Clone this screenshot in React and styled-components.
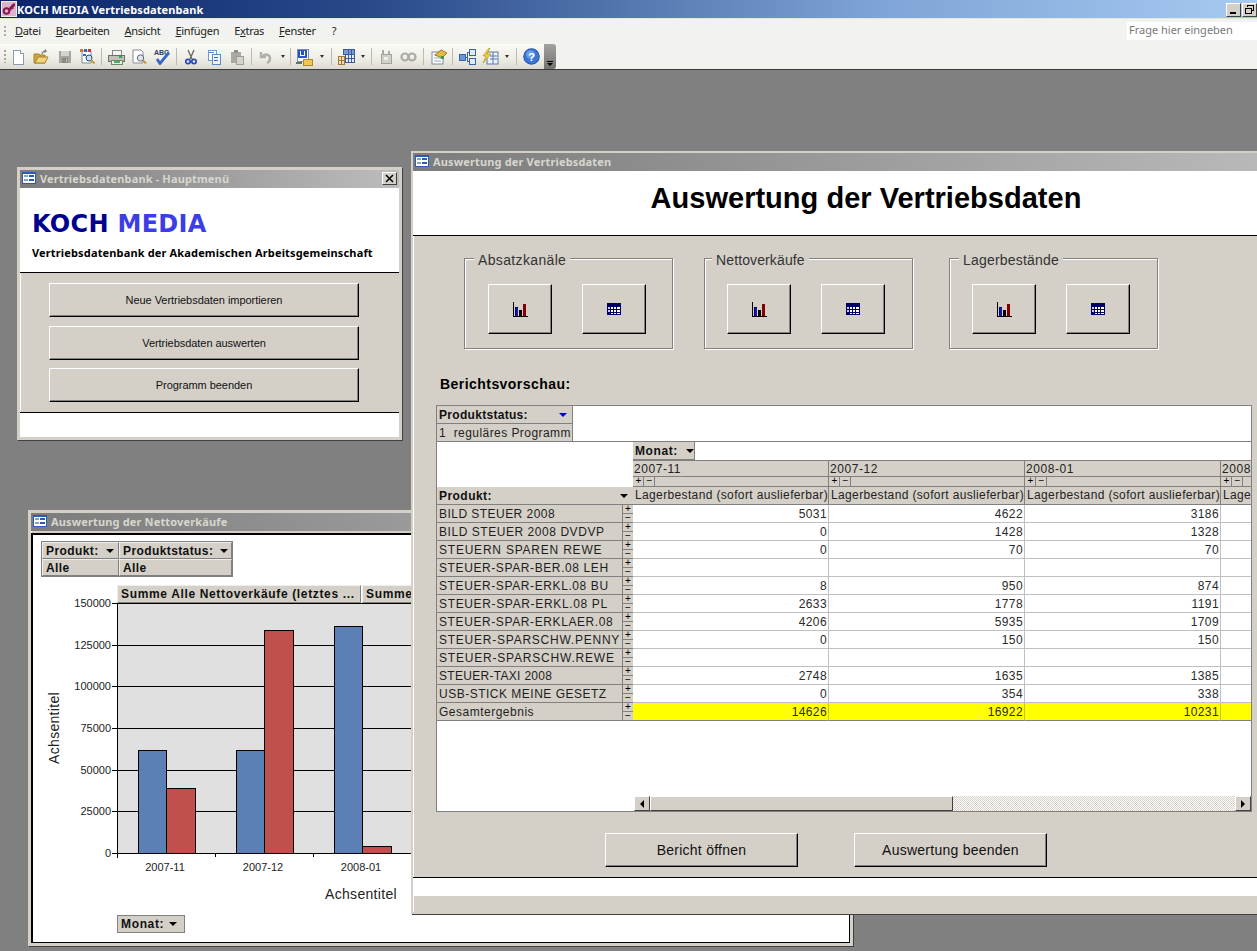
import React from 'react';
import styled, { createGlobalStyle } from 'styled-components';

const Global = createGlobalStyle`
  html, body { margin: 0; padding: 0; background: #808080; overflow: hidden; }
  * { box-sizing: border-box; }
`;
const ui = '"Noto Sans", "DejaVu Sans", sans-serif';
const arial = '"Liberation Sans", Arial, sans-serif';

const Desktop = styled.div`
  position: relative; width: 1257px; height: 951px; overflow: hidden; background: #808080;
  font-family: ${arial}; color: #000;
`;
const AppTitle = styled.header`
  height: 18px; display: flex; align-items: center; padding-left: 1px;
  background: linear-gradient(90deg, #0a246a 0%, #2a4a8a 30%, #7fa4d6 70%, #a6caf0 100%);
  color: #fff; font: bold 11px ${ui}; letter-spacing: .1px;
`;
const CaptionGroup = styled.div`margin-left: auto; display: flex; gap: 1px; padding-top: 1px;`;
const CaptionBtn = styled.button`
  width: 15px; height: 14px; padding: 0; display: flex; align-items: center; justify-content: center;
  background: #d4d0c8; border: 1px solid; border-color: #fff #404040 #404040 #fff;
`;
const Chrome = styled.div`
  height: 52px; background: #f2f2ee; border-bottom: 1px solid #3c3c3c; display: flex; flex-direction: column; position: relative;
`;
const MenuBar = styled.nav`
  height: 26px; display: flex; align-items: center; padding: 0 0 2px 15px; font: 11px ${ui}; color: #222; letter-spacing: -.3px;
  border-top: 1px solid #e8e6da; position: relative;
  &::before { content: ''; position: absolute; left: 4px; top: 7px; width: 2px; height: 11px;
    background: repeating-linear-gradient(#b0ad9e 0 2px, transparent 2px 4px); }
`;
const MenuItem = styled.span`
  margin-right: ${p => p.$gap}px; white-space: nowrap;
  u { text-decoration-thickness: 1px; text-underline-offset: 1px; }
`;
const AskBox = styled.div`
  position: absolute; left: 1127px; top: 3px; width: 130px; height: 18px; background: #fff;
  color: #777; font: 11px ${ui}; letter-spacing: 0; padding-left: 2px; line-height: 16px;
`;
const ToolRow = styled.div`
  width: 556px; height: 25px; display: flex; align-items: center; padding-left: 6px; position: relative;
  background: linear-gradient(#fbfbf8, #eeede5 60%, #dcdad0); border-radius: 0 3px 3px 0;
  &::before { content: ''; position: absolute; left: 4px; top: 6px; width: 2px; height: 13px;
    background: repeating-linear-gradient(#a8a597 0 2px, transparent 2px 4px); }
`;
const ToolSlot = styled.span`
  width: ${p => p.$w}px; height: 16px; display: flex; align-items: center; justify-content: center; flex: none;
`;
const ToolSep = styled.span`width: 1px; height: 17px; background: #bdbbad; flex: none; margin: 0 ${p => p.$m ?? 2}px;`;
const ToolEnd = styled.span`
  margin-left: auto; width: 12px; height: 25px; background: linear-gradient(#a2a29e, #72726e); border-radius: 0 3px 3px 0;
  display: flex; flex-direction: column; align-items: center; justify-content: flex-end; padding-bottom: 3px; gap: 1px;
  &::before { content: ''; width: 6px; height: 1px; background: #000; }
  &::after { content: ''; border: 3px solid transparent; border-top-color: #000; border-bottom: 0; }
`;
const MiniCaret = styled.span`
  width: 0; height: 0; border: 2.5px solid transparent; border-top: 3px solid #333; border-bottom: 0;
`;

const Win = styled.section`
  position: absolute; left: ${p => p.$x}px; top: ${p => p.$y}px; width: ${p => p.$w}px; height: ${p => p.$h}px;
  background: #d4d0c8; border: ${p => p.$b ?? 2}px solid #d4d0c8; display: flex; flex-direction: column;
  box-shadow: inset 1px 1px 0 #fff, 1px 1px 0 #404040;
`;
const WinTitle = styled.div`
  height: ${p => p.$h}px; flex: none; display: flex; align-items: center; gap: 4px; padding: 0 1px 2px 2px;
  background: linear-gradient(90deg, #7c7c7c, #bdbdbd);
  color: #d8d6ce; font: bold 11px ${ui}; letter-spacing: .15px; white-space: nowrap;
`;
const CloseBtn = styled(CaptionBtn)`margin-left: auto; height: 13px; margin-right: 1px;`;

/* menu window */
const Banner = styled.div`height: 84px; flex: none; background: #fff; padding: 20px 0 0 12px;`;
const Brand = styled.div`font: bold 24px "DejaVu Sans", sans-serif; color: #000090; line-height: 32px; letter-spacing: .3px;`;
const BrandAccent = styled.span`color: #3c3ce8;`;
const SubTitle = styled.div`font: bold 11px ${ui}; margin-top: 5px; white-space: nowrap; letter-spacing: .15px;`;
const Rule = styled.div`height: 1px; flex: none; background: #000;`;
const MenuPanel = styled.div`
  height: 139px; flex: none; display: flex; flex-direction: column; gap: 8.5px; padding: 10px 0 0 29px;
`;
const RaisedBtn = styled.button`
  width: ${p => p.$w}px; height: ${p => p.$h}px; flex: none; padding: 0; display: flex; align-items: center; justify-content: center;
  background: #d4d0c8; color: #111; border: 1px solid; border-color: #fff #000 #000 #fff;
  box-shadow: inset -1px -1px 0 #808080;
  font: ${p => p.$font}; letter-spacing: ${p => p.$ls ?? 0}px;
`;
const WhiteStrip = styled.div`flex: ${p => (p.$h ? 'none' : 1)}; height: ${p => (p.$h ? `${p.$h}px` : 'auto')}; background: #fff;`;

/* report window */
const ReportHead = styled.div`
  height: 64px; flex: none; background: #fff; display: flex; align-items: center; justify-content: center;
  font: bold 29px ${arial}; padding: 0 2px 9px 0; letter-spacing: .02px;
`;
const ReportBody = styled.div`height: 641px; flex: none; padding: 22px 0 0 23px; display: flex; flex-direction: column;`;
const Groups = styled.div`display: flex; padding-left: 28px;`;
const Group = styled.div`
  position: relative; width: ${p => p.$w}px; height: 91px; margin-left: ${p => p.$ml}px; flex: none;
  border: 1px solid #808080; box-shadow: 1px 1px 0 #fff, inset 1px 1px 0 #fff;
  display: flex; gap: 30px; padding: 25px 0 0 ${p => p.$pl}px;
`;
const GroupLabel = styled.span`
  position: absolute; left: ${p => p.$l}px; top: -7px; padding: 0 4px; background: #d4d0c8; font: 14px ${arial}; color: #333; line-height: 16px; letter-spacing: ${p => p.$ls}px;
`;
const Section = styled.h2`margin: 27px 0 0 4px; font: bold 14px ${arial}; letter-spacing: 0.45px; line-height: 16px;`;
const Pivot = styled.div`
  margin-top: 13px; width: 816px; height: 407px; flex: none; background: #fff; border: 1px solid #808080;
  display: flex; flex-direction: column; overflow: hidden; font: 12px ${arial}; letter-spacing: 0.36px; color: #222;
`;
const FilterZone = styled.div`height: 36px; flex: none; border-bottom: 1px solid #808080;`;
const ChipBase = styled.div`
  background: #d4d0c8; border-right: 1px solid #808080; border-bottom: 1px solid #808080;
  display: flex; align-items: center; padding-left: 2px; white-space: pre; overflow: hidden;
`;
const FilterHead = styled(ChipBase)`width: 136px; height: 18px; font-weight: bold; justify-content: space-between; padding-right: 5px; padding-top: 1px; letter-spacing: .3px; color: #111;`;
const FilterVal = styled(ChipBase)`width: 136px; height: 17px; border-bottom: 0; letter-spacing: .44px; font-size: 12px; padding-top: 1px;`;
const Caret = styled.span`
  flex: none; width: 0; height: 0; border: 4px solid transparent; border-top: 4px solid ${p => p.$c || '#000'}; border-bottom: 0;
`;
const PivotGrid = styled.div`
  flex: 1; display: grid; grid-template-columns: 196px repeat(4, 196px); grid-auto-rows: 18px;
  grid-template-rows: 19px 16px 10px 18px;
  align-content: start; min-height: 0;
`;
const Corner = styled.div`grid-row: 1 / span 3; grid-column: 1; background: #fff;`;
const MonatBar = styled.div`grid-column: 2 / span 4; background: #fff; border-bottom: 1px solid #808080; display: flex;`;
const FieldChip = styled(ChipBase)`
  width: ${p => p.$w}px; height: 18px; font-weight: bold; gap: 4px; letter-spacing: .6px; padding-top: 1px; color: #111;
`;
const ColHead = styled.div`background: #d4d0c8; border-right: 1px solid #808080; border-bottom: 1px solid #808080; padding-left: 1px; line-height: 17px; letter-spacing: .55px; overflow: hidden; white-space: nowrap;`;
const ToggleRow = styled.div`background: #d4d0c8; border-right: 1px solid #808080; border-bottom: 1px solid #808080; display: flex; padding-left: 1px;`;
const Toggle = styled.span`
  width: 10px; height: 9px; border-right: 1px solid #808080; font: 10px/8px ${arial}; color: #000; text-align: center; letter-spacing: 0; margin-right: 1px;
`;
const RowField = styled(ChipBase)`font-weight: bold; justify-content: space-between; padding-right: 5px; height: 18px; letter-spacing: .45px; border-right: 0; color: #111;`;
const MeasureHead = styled(ColHead)`line-height: 17px; padding-left: 2px; letter-spacing: .36px; height: 18px;`;
const RowHead = styled(ChipBase)`
  height: 18px; padding-left: 2px; padding-right: 0; border-right: 0; justify-content: space-between; color: #1e1e1e;
`;
const RowLabel = styled.span`padding-top: 1px; letter-spacing: ${p => p.$ls}px;`;
const Stepper = styled.span`
  flex: none; width: 11px; height: 17px; border-left: 1px solid #808080; font: 10px/8px ${arial}; color: #000; text-align: center; letter-spacing: 0; display: flex; flex-direction: column;
  span { height: 8px; display: block; }
  span + span { border-top: 1px solid #808080; }
`;
const DataCell = styled.div`
  height: 18px; text-align: right; padding-right: 1px; line-height: 19px; border-right: 1px solid ${p => (p.$total ? '#c8c800' : '#c0c0c0')};
  border-bottom: 1px solid ${p => (p.$total ? '#808080' : '#c0c0c0')}; background: ${p => (p.$total ? '#ffff00' : '#fff')}; letter-spacing: .4px; color: #2a2a2a;
  overflow: hidden;
`;
const ScrollBar = styled.div`height: 15px; flex: none; margin-left: 197px; display: flex;`;
const ScrollBtn = styled.button`
  width: 16px; height: 15px; padding: 0; flex: none; background: #d4d0c8; display: flex; align-items: center; justify-content: center;
  border: 1px solid; border-color: #fff #404040 #404040 #fff;
`;
const ScrollThumb = styled.div`width: 303px; flex: none; background: #d4d0c8; border: 1px solid; border-color: #fff #404040 #404040 #fff;`;
const ScrollTrack = styled.div`flex: 1; background: repeating-conic-gradient(#d4d0c8 0 25%, #fff 0 50%) 0 0 / 2px 2px;`;
const ArrowL = styled.span`width: 0; height: 0; border: 4px solid transparent; border-right: 4px solid #000; border-left: 0;`;
const ArrowR = styled.span`width: 0; height: 0; border: 4px solid transparent; border-left: 4px solid #000; border-right: 0;`;
const BottomBtns = styled.div`margin: 21px 0 0 169px; display: flex; gap: 56px;`;

/* chart window */
const ChartBody = styled.div`
  flex: 1; margin-top: 2px; background: #fff; border: 2px solid #000; border-right-width: 1px; border-bottom-width: 1px; padding: 6px 0 0 8px; position: relative; overflow: hidden;
`;
const FilterTable = styled.div`
  display: grid; grid-template-columns: 77px 113px; grid-auto-rows: 17px; width: 192px; background: #808080;
  border: 1px solid #808080; font: bold 12px ${arial}; letter-spacing: .4px; color: #111;
`;
const FilterCell = styled.div`
  background: #d4d0c8; border: 1px solid; border-color: #eee #808080 #808080 #eee; display: flex; align-items: center; gap: 7px; padding-left: 3px; white-space: nowrap;
`;
const ChartArea = styled.div`position: relative; margin: 8px 0 0 -6px; height: 322px; width: 815px;`;
const ChartSvg = styled.svg`display: block; text { font-family: ${arial}; fill: #222; }`;
const Legends = styled.div`position: absolute; left: 82px; top: 0; display: flex; gap: 1px; font: bold 12px ${arial}; letter-spacing: .65px; color: #111;`;
const LegendTab = styled.div`
  width: ${p => p.$w}px; height: 18px; background: #d4d0c8; border: 1px solid; border-color: #eee #808080 #808080 #eee; padding-left: 3px; line-height: 16px; white-space: nowrap; overflow: hidden;
`;
const MonatChip = styled.div`
  margin: 8px 0 0 76px; width: 68px; height: 18px; background: #d4d0c8; border: 1px solid #808080; display: flex; align-items: center; gap: 5px; padding-left: 3px;
  font: bold 12px ${arial}; letter-spacing: .65px; color: #111;
`;

/* ——— icons ——— */
const Ico = ({ s = 16, children, vb = '0 0 16 16' }) => <svg width={s} height={s} viewBox={vb} shapeRendering="crispEdges">{children}</svg>;
const AccessIcon = () => (
  <svg width="16" height="16" viewBox="0 0 16 16"><rect width="16" height="16" fill="#dcb4cc" /><rect x=".5" y=".5" width="15" height="15" fill="none" stroke="#f4e8f0" /><circle cx="5.500" cy="10" r="2.800" fill="none" stroke="#8a1850" strokeWidth="2" /><path d="M7 8l5-5.500h2v2.500l-1.500 1V8h-2v1.500H8z" fill="#8a1850" /></svg>
);
const FormIcon = () => (
  <Ico s={14} vb="0 0 14 14"><rect x="0" y="1" width="14" height="12" fill="#2c5ab8" /><rect x="1" y="3" width="12" height="9" fill="#fff" /><rect x="2" y="4" width="4" height="2" fill="#8a9fc9" /><rect x="7" y="4" width="5" height="2" fill="#2c5ab8" /><rect x="2" y="8" width="4" height="2" fill="#8a9fc9" /><rect x="7" y="8" width="5" height="2" fill="#2c5ab8" /></Ico>
);
const BarsIcon = () => (
  <Ico><path d="M1 1v14h15" fill="none" stroke="#000" /><rect x="3" y="6" width="3" height="9" fill="#000080" /><rect x="7" y="9" width="3" height="6" fill="#000" /><rect x="11" y="3" width="3" height="12" fill="#800000" /><rect x="4" y="7" width="2" height="8" fill="#1a1a9c" /></Ico>
);
const TableIcon = () => (
  <Ico><rect x="1" y="2" width="14" height="12" fill="#000060" /><rect x="5" y="6" width="2" height="2" fill="#fff" /><rect x="8" y="6" width="2" height="2" fill="#fff" /><rect x="11" y="6" width="3" height="2" fill="#fff" /><rect x="5" y="9" width="2" height="2" fill="#fff" /><rect x="8" y="9" width="2" height="2" fill="#fff" /><rect x="11" y="9" width="3" height="2" fill="#fff" /><rect x="5" y="12" width="2" height="1" fill="#fff" /><rect x="8" y="12" width="2" height="1" fill="#fff" /><rect x="11" y="12" width="3" height="1" fill="#fff" /><rect x="2" y="6" width="2" height="2" fill="#c8c8e8" /><rect x="2" y="9" width="2" height="2" fill="#c8c8e8" /></Ico>
);
const t = {
  page: <Ico><path d="M3 1h7l3 3v11H3z" fill="#fff" stroke="#8a9ab0" /><path d="M10 1v3h3" fill="#e6ecf4" stroke="#8a9ab0" /></Ico>,
  open: <svg width="17" height="16" viewBox="0 0 17 16"><path d="M1 5h5l1 1h5v8H1z" fill="#cfa23c" stroke="#a88432" /><path d="M2 14l3-6h10l-3 6z" fill="#f2d47c" stroke="#a88432" /><path d="M9 5c0-2 2-3 4-3l-1-1.500M13 2l-1.500 1.500" fill="none" stroke="#7c7c7c" strokeWidth="1.300" /></svg>,
  save: <Ico><rect x="2" y="2" width="12" height="12" fill="#a6a69e" /><rect x="4" y="2" width="8" height="5" fill="#d4d4ce" /><rect x="5" y="9" width="6" height="5" fill="#8a8a84" /><rect x="9" y="10" width="1" height="3" fill="#c4c4be" /></Ico>,
  find: <svg width="17" height="16" viewBox="0 0 17 16"><path d="M3 2h9v12H3z" fill="#fff" stroke="#7a8aa0" /><rect x="1" y="0" width="3" height="3" fill="#d8782c" /><rect x="5" y="0" width="3" height="3" fill="#3a6ab8" /><rect x="9" y="0" width="3" height="3" fill="#c83a3a" /><rect x="4" y="5" width="3" height="2" fill="#3a6ab8" /><circle cx="10" cy="9" r="3" fill="#cfe3f7" stroke="#23477f" /><path d="M12 11l3.500 3.500" stroke="#c89a30" strokeWidth="2" /></svg>,
  print: <Ico s={18} vb="0 0 18 18"><rect x="5" y="2" width="9" height="5" fill="#f4f4f0" stroke="#8a8a8a" /><rect x="1" y="7" width="16" height="6" fill="#c0c0b8" stroke="#6e6e6e" /><rect x="4" y="12" width="11" height="4" fill="#e8f0e8" stroke="#6e8a6e" /><rect x="12" y="8" width="3" height="2" fill="#3aa04a" /><rect x="7" y="13" width="6" height="2" fill="#4ab05a" /></Ico>,
  prev: <svg width="17" height="16" viewBox="0 0 17 16"><path d="M2 1h8l2 2v11H2z" fill="#fff" stroke="#8a8a9c" /><circle cx="9.500" cy="9" r="3.200" fill="#dbe8f4" stroke="#666" /><path d="M12 11.500l3 3" stroke="#c89a30" strokeWidth="2" /></svg>,
  spell: <svg width="19" height="16" viewBox="0 0 19 16"><text x="1" y="6" fontSize="7" fontWeight="700" fontFamily="Liberation Sans" fill="#27406e">ABC</text><path d="M4 10l3 4.500 9-11" fill="none" stroke="#3568c4" strokeWidth="2.800" /></svg>,
  cut: <svg width="16" height="16" viewBox="0 0 16 16"><path d="M5 1l4 9M11 1l-4 9" stroke="#666" strokeWidth="1.300" /><circle cx="5" cy="12.500" r="2.200" fill="none" stroke="#2a4ab0" strokeWidth="1.700" /><circle cx="11" cy="12.500" r="2.200" fill="none" stroke="#2a4ab0" strokeWidth="1.700" /></svg>,
  copy: <Ico><rect x="2" y="1" width="8" height="10" fill="#fff" stroke="#7898c8" /><rect x="3" y="3" width="5" height="1" fill="#5a88d8" /><rect x="6" y="5" width="8" height="10" fill="#eef4fc" stroke="#5a88d8" /><rect x="8" y="8" width="4" height="1" fill="#3a68c0" /><rect x="8" y="11" width="4" height="1" fill="#3a68c0" /></Ico>,
  paste: <Ico><rect x="2" y="3" width="10" height="11" fill="#aaaaa2" /><rect x="5" y="1" width="4" height="3" fill="#8e8e88" /><rect x="7" y="7" width="7" height="8" fill="#d4d4ce" stroke="#9e9e98" /></Ico>,
  undo: <svg width="16" height="16" viewBox="0 0 16 16"><path d="M3 3v5h5M4 8c3-4 8-3 8 2 0 2-1 3-3 4" fill="none" stroke="#b0b0aa" strokeWidth="2.400" /></svg>,
  word: <Ico s={18} vb="0 0 18 18"><rect x="2" y="1" width="11" height="12" fill="#fff" stroke="#7a8ab0" /><rect x="3" y="2" width="9" height="8" fill="#2a54c0" /><rect x="5" y="3" width="5" height="5" fill="#fff" /><rect x="6" y="3" width="3" height="4" fill="#2a54c0" /><rect x="8" y="11" width="9" height="6" fill="#f0c850" stroke="#b08a30" /><rect x="1" y="14" width="6" height="2" fill="#5a7a5a" /></Ico>,
  grid: <Ico s={18} vb="0 0 18 18"><rect x="6" y="1" width="11" height="5" fill="#7a9ad8" stroke="#3a5a9c" /><rect x="8" y="6" width="9" height="8" fill="#e4ecfa" stroke="#3a5a9c" /><path d="M11 1v13M14 1v13M8 10h9" stroke="#3a5a9c" /><rect x="1" y="8" width="6" height="8" fill="#f0dcb0" stroke="#a07a30" /><path d="M1 12h6M4 8v8" stroke="#a07a30" /></Ico>,
  rel: <Ico><rect x="3" y="5" width="10" height="9" fill="#d0d0ca" stroke="#a4a49e" /><rect x="6" y="8" width="4" height="3" fill="#eeeeea" /><path d="M5 1v4M11 2v4" stroke="#a8a8a2" strokeWidth="2" /></Ico>,
  link: <svg width="17" height="16" viewBox="0 0 17 16"><circle cx="5" cy="8" r="3.500" fill="none" stroke="#ababa5" strokeWidth="2.200" /><circle cx="12" cy="8" r="3.500" fill="none" stroke="#ababa5" strokeWidth="2.200" /></svg>,
  prop: <svg width="18" height="18" viewBox="0 0 18 18"><rect x="2" y="4" width="11" height="12" fill="#fff" stroke="#7a8aa4" /><path d="M4 7h7M4 10h7M4 13h7" stroke="#9aa8c0" /><path d="M5 7l6-5 6 3-5 5z" fill="#e8b840" stroke="#a07a20" /><rect x="11" y="8" width="3" height="3" fill="#3a9a4a" /></svg>,
  flow: <Ico s={18} vb="0 0 18 18"><rect x="1" y="6" width="6" height="6" fill="#6a94dc" stroke="#3a62a8" /><rect x="11" y="1" width="6" height="6" fill="#dfe9fa" stroke="#3a62a8" /><rect x="11" y="10" width="6" height="6" fill="#dfe9fa" stroke="#3a62a8" /><path d="M7 9h2M9 4v9M9 4h2M9 13h2" stroke="#3a62a8" /></Ico>,
  bolt: <svg width="18" height="18" viewBox="0 0 18 18"><rect x="6" y="4" width="11" height="12" fill="#eef2fa" stroke="#5a78ac" /><path d="M9 8h7M9 11h7M12 4v12" stroke="#5a78ac" /><path d="M8 0L2 8h3l-3 7 8-9H6l3-6z" fill="#f0d030" stroke="#a89020" strokeWidth=".6" /></svg>,
  help: <svg width="17" height="17" viewBox="0 0 16 16"><circle cx="8" cy="8" r="7.300" fill="#3a76d8" stroke="#2a5ab0" /><circle cx="7" cy="6" r="4" fill="#8cb8f0" opacity=".6" /><text x="8" y="12" textAnchor="middle" fontSize="11" fontWeight="700" fontFamily="Liberation Sans" fill="#fff">?</text></svg>,
};
const tools = [
  ['i', t.page, 24], ['i', t.open, 23], ['i', t.save, 23], ['i', t.find, 23], ['s'],
  ['i', t.print, 23], ['i', t.prev, 24], ['i', t.spell, 23], ['s'],
  ['i', t.cut, 23], ['i', t.copy, 23], ['i', t.paste, 23], ['s', 3],
  ['i', t.undo, 22], ['c', 12], ['s', 1],
  ['i', t.word, 24], ['c', 12], ['s', 3],
  ['i', t.grid, 22], ['c', 12], ['s', 2],
  ['i', t.rel, 23], ['i', t.link, 23], ['s', 3],
  ['i', t.prop, 23], ['s', 2],
  ['i', t.flow, 23], ['i', t.bolt, 23], ['c', 12], ['s', 3],
  ['i', t.help, 23],
];

const menus = [
  ['D', 'atei', 15], ['B', 'earbeiten', 15], ['A', 'nsicht', 15], ['E', 'infügen', 15],
  ['', 'E', 15, 'x', 'tras'], ['F', 'enster', 16], ['', '?', 0],
];
const months = ['2007-11', '2007-12', '2008-01', '2008-02'];
const rows = [
  ['BILD STEUER 2008', 0.46, 5031, 4622, 3186],
  ['BILD STEUER 2008 DVDVP', 0.55, 0, 1428, 1328],
  ['STEUERN SPAREN REWE', 0.78, 0, 70, 70],
  ['STEUER-SPAR-BER.08 LEH', 0.6, '', '', ''],
  ['STEUER-SPAR-ERKL.08 BU', 0.6, 8, 950, 874],
  ['STEUER-SPAR-ERKL.08 PL', 0.65, 2633, 1778, 1191],
  ['STEUER-SPAR-ERKLAER.08', 0.6, 4206, 5935, 1709],
  ['STEUER-SPARSCHW.PENNY', 0.76, 0, 150, 150],
  ['STEUER-SPARSCHW.REWE', 0.8, '', '', ''],
  ['STEUER-TAXI 2008', 0.3, 2748, 1635, 1385],
  ['USB-STICK MEINE GESETZ', 0.5, 0, 354, 338],
];
const total = ['Gesamtergebnis', 14626, 16922, 10231];
const groups = [
  ['Absatzkanäle', 209, 0, 9, 23, 0.35],
  ['Nettoverkäufe', 209, 31, 7, 22, 0.12],
  ['Lagerbestände', 209, 36, 9, 22, 0.2],
];

const gridlines = [[150000, 603], [125000, 645], [100000, 686], [75000, 728], [50000, 770], [25000, 811], [0, 853]];
const bars = [
  [138, 750, '#5b80b5', 28], [166, 788, '#c0504d', 29],
  [236, 750, '#5b80b5', 28], [264, 630, '#c0504d', 29],
  [334, 626, '#5b80b5', 28], [362, 846, '#c0504d', 29],
];

function Chart() {
  return (
    <ChartSvg width="815" height="322" viewBox="35 585 815 322">
      <rect x="117" y="603" width="733" height="250" fill="#e0e0e0" />
      {gridlines.map(([v, y]) => (
        <g key={v}>
          <line x1="112" x2="850" y1={y + 0.5} y2={y + 0.5} stroke="#000" />
          <text x="111" y={y + 4} textAnchor="end" fontSize="11">{v}</text>
        </g>
      ))}
      <line x1="117.500" x2="117.500" y1="603" y2="858" stroke="#000" />
      {[215, 313, 411].map(x => <line key={x} x1={x + 0.5} x2={x + 0.5} y1="853" y2="857" stroke="#000" />)}
      {bars.map(([x, y, c, w]) => <rect key={x} x={x + 0.5} y={y + 0.5} width={w} height={853 - y} fill={c} stroke="#000" />)}
      {[['2007-11', 165], ['2007-12', 263], ['2008-01', 361]].map(([l, x]) => (
        <text key={l} x={x} y="871" textAnchor="middle" fontSize="11">{l}</text>
      ))}
      <text x="361" y="899" textAnchor="middle" fontSize="14" letterSpacing=".3">Achsentitel</text>
      <text transform="translate(59 728) rotate(-90)" textAnchor="middle" fontSize="14" letterSpacing=".3">Achsentitel</text>
    </ChartSvg>
  );
}

export default function App() {
  return (
    <Desktop>
      <Global />
      <AppTitle>
        <AccessIcon />
        <span>KOCH MEDIA Vertriebsdatenbank</span>
        <CaptionGroup>
          <CaptionBtn aria-label="Minimieren"><svg width="9" height="9"><rect x="1" y="7" width="6" height="2" fill="#000" /></svg></CaptionBtn>
          <CaptionBtn aria-label="Wiederherstellen"><svg width="9" height="9" shapeRendering="crispEdges"><path d="M2.500 2V.5h6v5H7M.5 3.500h6v5h-6z" fill="none" stroke="#000" /></svg></CaptionBtn>
        </CaptionGroup>
      </AppTitle>
      <Chrome>
        <MenuBar>
          {menus.map(([u, rest, gap, u2, rest2]) => (
            <MenuItem key={rest + (u2 || '')} $gap={gap}>
              {u && <u>{u}</u>}{rest}{u2 && <u>{u2}</u>}{rest2}
            </MenuItem>
          ))}
          <AskBox>Frage hier eingeben</AskBox>
        </MenuBar>
        <ToolRow>
          {tools.map((x, i) => x[0] === 'i' ? <ToolSlot key={i} $w={x[2]}>{x[1]}</ToolSlot>
            : x[0] === 'c' ? <ToolSlot key={i} $w={x[1]}><MiniCaret /></ToolSlot>
            : <ToolSep key={i} $m={x[1]} />)}
          <ToolEnd />
        </ToolRow>
      </Chrome>

      <Win $x={17} $y={167} $w={385} $h={273} $b={3}>
        <WinTitle $h={18}>
          <FormIcon /><span>Vertriebsdatenbank - Hauptmenü</span>
          <CloseBtn aria-label="Schließen"><svg width="9" height="9"><path d="M1 1l7 7M8 1L1 8" stroke="#000" strokeWidth="1.500" /></svg></CloseBtn>
        </WinTitle>
        <Banner>
          <Brand>KOCH <BrandAccent>MEDIA</BrandAccent></Brand>
          <SubTitle>Vertriebsdatenbank der Akademischen Arbeitsgemeinschaft</SubTitle>
        </Banner>
        <Rule />
        <MenuPanel>
          {['Neue Vertriebsdaten importieren', 'Vertriebsdaten auswerten', 'Programm beenden'].map(l => (
            <RaisedBtn key={l} $w={310} $h={34} $font={`11px ${arial}`} $ls={-0.05}>{l}</RaisedBtn>
          ))}
        </MenuPanel>
        <Rule />
        <WhiteStrip />
      </Win>

      <Win $x={28} $y={510} $w={825} $h={436} $b={3}>
        <WinTitle $h={18}>
          <FormIcon /><span>Auswertung der Nettoverkäufe</span>
        </WinTitle>
        <ChartBody>
          <FilterTable>
            <FilterCell>Produkt: <Caret /></FilterCell>
            <FilterCell>Produktstatus: <Caret /></FilterCell>
            <FilterCell>Alle</FilterCell>
            <FilterCell>Alle</FilterCell>
          </FilterTable>
          <ChartArea>
            <Chart />
            <Legends>
              <LegendTab $w={244}>Summe Alle Nettoverkäufe (letztes ...</LegendTab>
              <LegendTab $w={244}>Summe Alle Nettoverkäufe</LegendTab>
            </Legends>
          </ChartArea>
          <MonatChip>Monat: <Caret /></MonatChip>
        </ChartBody>
      </Win>

      <Win $x={411} $y={151} $w={912} $h={763}>
        <WinTitle $h={18}>
          <FormIcon /><span>Auswertung der Vertriebsdaten</span>
        </WinTitle>
        <ReportHead>Auswertung der Vertriebsdaten</ReportHead>
        <Rule />
        <ReportBody>
          <Groups>
            {groups.map(([label, w, ml, l, pl, ls]) => (
              <Group key={label} $w={w} $ml={ml} $pl={pl}>
                <GroupLabel $l={l} $ls={ls}>{label}</GroupLabel>
                <RaisedBtn $w={64} $h={50} aria-label="Diagramm"><BarsIcon /></RaisedBtn>
                <RaisedBtn $w={64} $h={50} aria-label="Tabelle"><TableIcon /></RaisedBtn>
              </Group>
            ))}
          </Groups>
          <Section>Berichtsvorschau:</Section>
          <Pivot>
            <FilterZone>
              <FilterHead>Produktstatus: <Caret $c="#0000d0" /></FilterHead>
              <FilterVal>{'1  reguläres Programm'}</FilterVal>
            </FilterZone>
            <PivotGrid>
              <Corner />
              <MonatBar><FieldChip $w={62}>Monat: <Caret /></FieldChip></MonatBar>
              {months.map(m => <ColHead key={m}>{m}</ColHead>)}
              {months.map(m => <ToggleRow key={m}><Toggle>+</Toggle><Toggle>−</Toggle></ToggleRow>)}
              <RowField>Produkt: <Caret /></RowField>
              {months.map(m => <MeasureHead key={m}>Lagerbestand (sofort auslieferbar)</MeasureHead>)}
              {rows.map(([name, ls, ...vals]) => (
                <React.Fragment key={name}>
                  <RowHead><RowLabel $ls={ls}>{name}</RowLabel><Stepper><span>+</span><span>−</span></Stepper></RowHead>
                  {vals.map((v, i) => <DataCell key={i}>{v}</DataCell>)}
                  <DataCell />
                </React.Fragment>
              ))}
              <RowHead><RowLabel $ls={0.5}>{total[0]}</RowLabel><Stepper><span>+</span><span>−</span></Stepper></RowHead>
              {total.slice(1).map(v => <DataCell key={v} $total>{v}</DataCell>)}
              <DataCell $total />
            </PivotGrid>
            <ScrollBar>
              <ScrollBtn aria-label="Links"><ArrowL /></ScrollBtn>
              <ScrollThumb />
              <ScrollTrack />
              <ScrollBtn aria-label="Rechts"><ArrowR /></ScrollBtn>
            </ScrollBar>
          </Pivot>
          <BottomBtns>
            <RaisedBtn $w={193} $h={34} $font={`14px ${arial}`} $ls={0.25}>Bericht öffnen</RaisedBtn>
            <RaisedBtn $w={193} $h={34} $font={`14px ${arial}`} $ls={0.25}>Auswertung beenden</RaisedBtn>
          </BottomBtns>
        </ReportBody>
        <Rule />
        <WhiteStrip $h={18} />
      </Win>
    </Desktop>
  );
}
